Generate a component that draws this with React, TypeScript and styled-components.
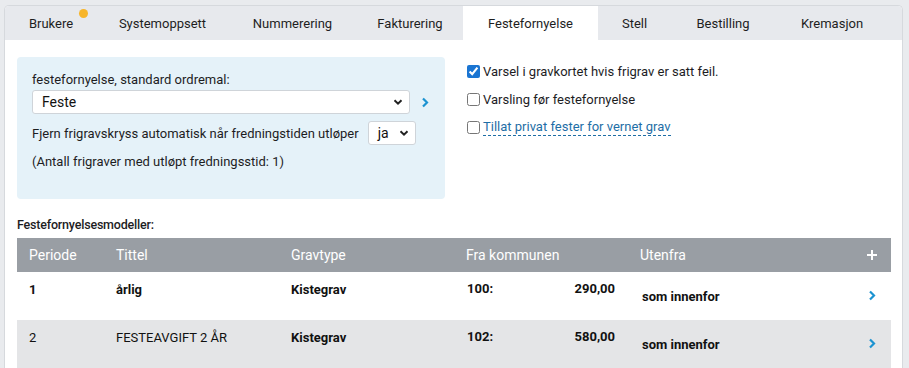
import React from "react";
import styled, { createGlobalStyle } from "styled-components";

const Global = createGlobalStyle`
  html, body { margin: 0; padding: 0; }
  body {
    background: #e9ebee;
    font-family: Roboto, "Noto Sans", "Liberation Sans", sans-serif;
    color: #1d1d1f;
    font-size: 13px;
  }
`;

const Page = styled.div`
  padding: 5px 6px 0 4px;
`;

const Frame = styled.div`
  border: 1px solid #d6d9dd;
  border-bottom: none;
  border-radius: 5px 5px 0 0;
  background: #fff;
  overflow: hidden;
  height: 363px;
`;

const TabBar = styled.div`
  display: flex;
  background: #e7e9ed;
  height: 34px;
`;

const Tab = styled.div<{ $w: number; $active?: boolean }>`
  position: relative;
  width: ${(p) => p.$w}px;
  display: flex;
  align-items: center;
  justify-content: center;
  font-size: 13px;
  padding-top: 1px;
  color: #1e1e1e;
  background: ${(p) => (p.$active ? "#fff" : "transparent")};
`;

const Dot = styled.span`
  position: absolute;
  width: 9px;
  height: 9px;
  border-radius: 50%;
  background: #f7b52a;
  top: 3px;
  right: 9px;
`;

const Body = styled.div`
  padding: 17px 11px 0 12px;
`;

const Top = styled.div`
  display: grid;
  grid-template-columns: 428px 1fr;
  column-gap: 22px;
`;

const Panel = styled.div`
  background: #e5f2f9;
  border-radius: 4px;
  padding: 14px 15px 0 15px;
  height: 128px;
`;

const Label = styled.div`
  font-size: 13px;
  line-height: 17px;
`;

const Row = styled.div`
  display: flex;
  align-items: center;
`;

const SelectBox = styled.div<{ $w: number }>`
  width: ${(p) => p.$w}px;
  height: 24px;
  box-sizing: border-box;
  background: #fff;
  border: 1px solid #cfd4d9;
  border-radius: 3px;
  display: flex;
  align-items: center;
  justify-content: space-between;
  padding: 0 6px 0 8px;
  font-size: 14px;
  color: #111;
`;

const Chevron = ({ color = "#222", size = 10 }: { color?: string; size?: number }) => (
  <svg width={size} height={size} viewBox="0 0 10 10">
    <path d="M1.5 3.2 L5 6.7 L8.5 3.2" fill="none" stroke={color} strokeWidth="2" />
  </svg>
);

const Right = ({ color = "#1c93d1" }: { color?: string }) => (
  <svg width="8" height="11" viewBox="0 0 8 11">
    <path d="M2 1.5 L6 5.5 L2 9.5" fill="none" stroke={color} strokeWidth="2.2" />
  </svg>
);

const Arrow = styled.span`
  margin-left: 11px;
  display: flex;
  align-items: center;
`;

const Checks = styled.div`
  display: flex;
  flex-direction: column;
  gap: 11px;
  padding-top: 6px;
`;

const CheckRow = styled.label`
  display: flex;
  align-items: center;
  gap: 3px;
  font-size: 13px;
  line-height: 17px;
  input {
    margin: 0;
    width: 13px;
    height: 13px;
    accent-color: #1a75d2;
  }
`;

const LinkText = styled.span`
  color: #1e6ea6;
  border-bottom: 1px dashed #1e6ea6;
  line-height: 16px;
`;

const Heading = styled.div`
  font-size: 12.5px;
  font-weight: 500;
  margin-top: 18px;
  margin-bottom: 6px;
  letter-spacing: -0.2px;
`;

const Table = styled.div`
  width: 874px;
`;

const cols = "87px 175px 175px 174px 1fr 30px";

const Head = styled.div`
  display: grid;
  grid-template-columns: ${cols};
  background: #999ea4;
  height: 34px;
  align-items: center;
  color: #fff;
  font-size: 14px;
  padding-left: 12px;
`;

const DataRow = styled.div<{ $alt?: boolean }>`
  display: grid;
  grid-template-columns: ${cols};
  background: ${(p) => (p.$alt ? "#e4e5e7" : "#fff")};
  height: 48px;
  padding-left: 12px;
  font-size: 13px;
  color: #111;
`;

const Cell = styled.div<{ $bold?: boolean }>`
  padding-top: 10px;
  font-weight: ${(p) => (p.$bold ? 700 : 400)};
`;

const Money = styled.div`
  padding-top: 9px;
  display: flex;
  justify-content: space-between;
  font-weight: 700;
  padding-right: 25px;
  padding-left: 1px;
`;

const Low = styled.div`
  padding-top: 17px;
  font-weight: 700;
  padding-left: 2px;
`;

const Act = styled.div`
  padding-top: 18px;
  display: flex;
  padding-left: 7px;
`;

const Plus = styled.div`
  display: flex;
  align-items: center;
  padding-left: 5px;
`;

const tabs: [string, number][] = [
  ["Brukere", 92],
  ["Systemoppsett", 131],
  ["Nummerering", 129],
  ["Fakturering", 106],
  ["Festefornyelse", 135],
  ["Stell", 73],
  ["Bestilling", 104],
  ["Kremasjon", 114],
];

const rows = [
  { p: "1", t: "årlig", bold: true, g: "Kistegrav", k: "100:", v: "290,00" },
  { p: "2", t: "FESTEAVGIFT 2 ÅR", bold: false, g: "Kistegrav", k: "102:", v: "580,00" },
];

export default function App() {
  return (
    <>
      <Global />
      <Page>
        <Frame>
          <TabBar>
            {tabs.map(([t, w]) => (
              <Tab key={t} $w={w} $active={t === "Festefornyelse"}>
                {t}
                {t === "Brukere" && <Dot />}
              </Tab>
            ))}
          </TabBar>
          <Body>
            <Top>
              <Panel>
                <Label>festefornyelse, standard ordremal:</Label>
                <Row style={{ marginTop: 2 }}>
                  <SelectBox $w={378} style={{ paddingLeft: 9 }}>
                    Feste
                    <Chevron />
                  </SelectBox>
                  <Arrow>
                    <Right />
                  </Arrow>
                </Row>
                <Row style={{ marginTop: 7, gap: 9 }}>
                  <Label>Fjern frigravskryss automatisk når fredningstiden utløper</Label>
                  <SelectBox $w={48} style={{ paddingLeft: 9 }}>
                    ja
                    <Chevron />
                  </SelectBox>
                </Row>
                <Label style={{ marginTop: 8 }}>(Antall frigraver med utløpt fredningsstid: 1)</Label>
              </Panel>
              <Checks>
                <CheckRow>
                  <input type="checkbox" defaultChecked />
                  Varsel i gravkortet hvis frigrav er satt feil.
                </CheckRow>
                <CheckRow>
                  <input type="checkbox" />
                  Varsling før festefornyelse
                </CheckRow>
                <CheckRow>
                  <input type="checkbox" />
                  <LinkText>Tillat privat fester for vernet grav</LinkText>
                </CheckRow>
              </Checks>
            </Top>
            <Heading>Festefornyelsesmodeller:</Heading>
            <Table>
              <Head>
                <div>Periode</div>
                <div>Tittel</div>
                <div>Gravtype</div>
                <div>Fra kommunen</div>
                <div>Utenfra</div>
                <Plus>
                  <svg width="12" height="12" viewBox="0 0 12 12">
                    <path d="M6 1 V11 M1 6 H11" stroke="#fff" strokeWidth="2" />
                  </svg>
                </Plus>
              </Head>
              {rows.map((r, i) => (
                <DataRow key={r.p} $alt={i % 2 === 1}>
                  <Cell $bold={r.bold}>{r.p}</Cell>
                  <Cell $bold={r.bold}>{r.t}</Cell>
                  <Cell $bold>{r.g}</Cell>
                  <Money>
                    <span>{r.k}</span>
                    <span>{r.v}</span>
                  </Money>
                  <Low>som innenfor</Low>
                  <Act>
                    <Right />
                  </Act>
                </DataRow>
              ))}
            </Table>
          </Body>
        </Frame>
      </Page>
    </>
  );
}
